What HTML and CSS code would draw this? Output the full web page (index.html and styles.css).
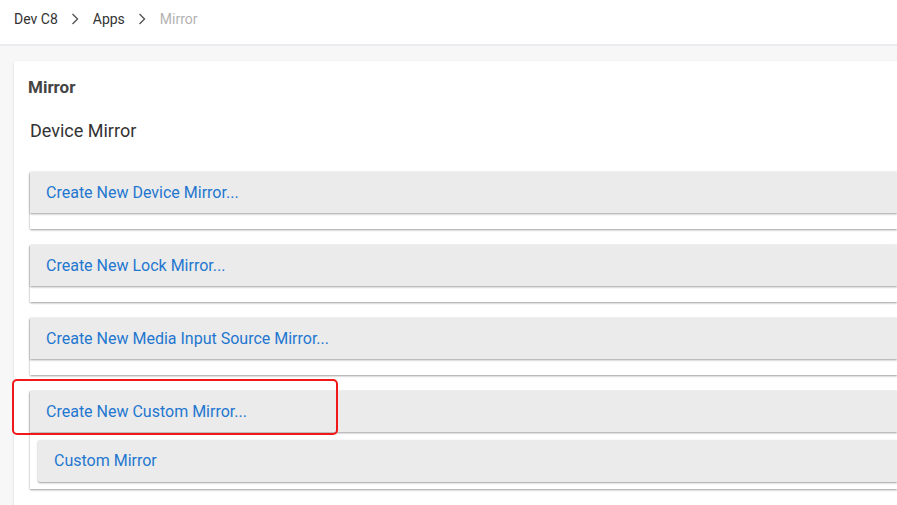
FILE: index.html
```html
<!DOCTYPE html>
<html lang="en">
<head>
    <meta charset="UTF-8">
    <meta name="viewport" content="width=device-width, initial-scale=1.0">
    <title>Mirror</title>
    <link rel="stylesheet" href="styles.css">
</head>
<body>
    <div class="breadcrumb">
        <span class="crumb">Dev C8</span>
        <svg class="chevron" viewBox="0 0 8 12" width="8" height="12"><path d="M1.5 1 L6.5 6 L1.5 11" fill="none" stroke="#555" stroke-width="1.4"/></svg>
        <span class="crumb">Apps</span>
        <svg class="chevron" viewBox="0 0 8 12" width="8" height="12"><path d="M1.5 1 L6.5 6 L1.5 11" fill="none" stroke="#555" stroke-width="1.4"/></svg>
        <span class="crumb current">Mirror</span>
    </div>

    <div class="page">
        <div class="card">
            <h2 class="card-title">Mirror</h2>
            <h3 class="section-title">Device Mirror</h3>

            <div class="panel">
                <div class="panel-header">Create New Device Mirror...</div>
                <div class="panel-body"></div>
            </div>
            <div class="panel">
                <div class="panel-header">Create New Lock Mirror...</div>
                <div class="panel-body"></div>
            </div>
            <div class="panel">
                <div class="panel-header">Create New Media Input Source Mirror...</div>
                <div class="panel-body"></div>
            </div>
            <div class="panel">
                <div class="panel-header">Create New Custom Mirror...</div>
                <div class="panel-body nested">
                    <div class="panel-header child">Custom Mirror</div>
                </div>
            </div>
        </div>
    </div>

    <!-- highlight box drawn over the custom mirror button -->
    <div class="highlight"></div>
</body>
</html>
```

FILE: styles.css
```css
body {
    margin: 0;
    font-family: Roboto, "Liberation Sans", Arial, sans-serif;
    background-color: #f7f7f8;
    overflow: hidden;
    height: 505px;
}

.breadcrumb {
    display: flex;
    align-items: center;
    height: 46px;
    padding-left: 14px;
    background-color: #fff;
    border-bottom: 2px solid #ececf0;
    box-sizing: border-box;
    font-size: 14px;
    color: #333;
    padding-bottom: 6px;
}

.chevron {
    margin: 0 14px 0 13px;
}

.crumb.current {
    color: #b3b3b3;
}

.page {
    padding: 15px 0 0 14px;
}

.card {
    background-color: #fff;
    border-radius: 3px;
    box-shadow: 0 1px 3px rgba(0, 0, 0, 0.12);
    margin-right: -30px;
    padding: 16px 30px 20px 14px;
    min-height: 460px;
}

.card-title {
    margin: 0;
    font-size: 17px;
    line-height: 20px;
    font-weight: 700;
    color: #444;
}

.section-title {
    margin: 22px 0 29px 2px;
    font-size: 18px;
    line-height: 24px;
    font-weight: 400;
    color: #333;
}

.panel {
    margin: 0 0 16.5px 2px;
    background-color: #fff;
    box-shadow: 0 1px 2px rgba(0, 0, 0, 0.38), 0 0 1px rgba(0, 0, 0, 0.08);
}

.panel-header {
    height: 41px;
    line-height: 41px;
    padding-left: 16px;
    background-color: #ebebeb;
    color: #1f77d0;
    font-size: 16px;
    box-shadow: 0 1px 2px rgba(0, 0, 0, 0.38);
}

.panel-body {
    height: 15.5px;
}

.panel-body.nested {
    height: auto;
    padding: 8px 0 7px 8px;
}

.panel-header.child {
    height: 42px;
    line-height: 42px;
    border-radius: 2px 0 0 2px;
}

.highlight {
    position: absolute;
    left: 12px;
    top: 379px;
    width: 322px;
    height: 52px;
    border: 2px solid #f01818;
    border-radius: 5px;
}
```
